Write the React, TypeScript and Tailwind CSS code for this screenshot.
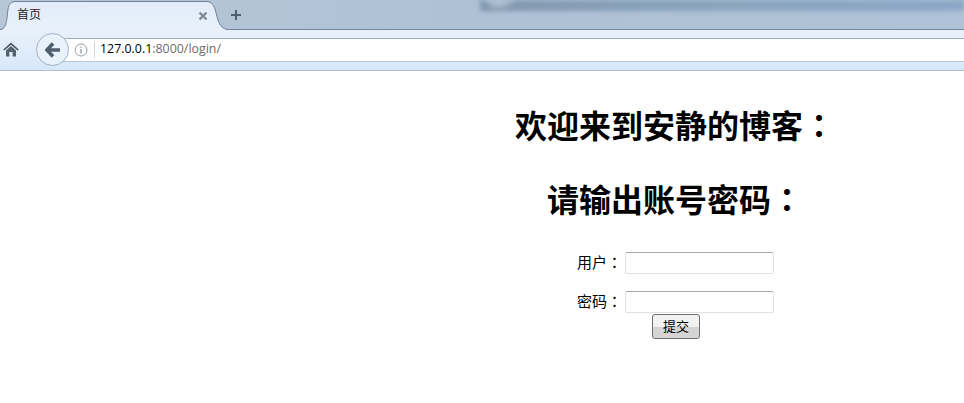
const CJK = "font-['Liberation_Sans','Noto_Sans_CJK_SC',sans-serif]";
// the reference's full-width colon sits centred in its cell, as in the TC font
const COLON = "font-['Noto_Sans_CJK_TC',sans-serif] leading-[0]";

function TabShape() {
  return (
    <svg className="absolute left-0 top-0" width="240" height="31" viewBox="0 0 240 31">
      <defs>
        <linearGradient id="tabFill" x1="0" y1="0" x2="0" y2="1">
          <stop offset="0" stopColor="#e2edf9" />
          <stop offset="1" stopColor="#e8f1fb" />
        </linearGradient>
      </defs>
      <path d="M0 30 C5 29 6 25 7 18 L8 9 C9 4 11 2 16 2 L206 2 C211 2 213 4 215 9 L218 20 C220 26 223 29 228 30 L240 30 L240 31 L0 31 Z" fill="url(#tabFill)" />
      <path d="M0 29.5 C5 29 6 25 7 18 L8 9 C9 4 11 1.5 16 1.5 L206 1.5 C211 1.5 213 4 215 9 L218 20 C220 26 223 29 228 29.5 L240 29.5" fill="none" stroke="#6f8297" strokeWidth="1" />
    </svg>
  );
}

function Toolbar() {
  return (
    <div className="relative h-[41px] bg-gradient-to-b from-[#e8f1fb] to-[#d8e8f9] border-b border-[#afc0d3]">
      <div className="flex h-full items-center">
        <svg className="ml-[3px] mb-[1px]" width="16" height="15" viewBox="0 0 16 15">
          <path d="M8 0.5 L15.7 7.6 L14.6 8.6 L8 2.8 L1.4 8.6 L0.3 7.6 Z" fill="#46535f" />
          <path d="M8 4 L13 8.4 L13 14.5 L9.6 14.5 L9.6 10 L6.4 10 L6.4 14.5 L3 14.5 L3 8.4 Z" fill="#55636f" />
        </svg>
        <div className="relative z-10 ml-[17px] mb-[1px] flex h-[33px] w-[33px] items-center justify-center rounded-full border border-[#9fb2c6] bg-[#e9f1fa]">
          <svg width="15" height="16" viewBox="0 0 15 16">
            <path d="M8 1.5 L2 8 L8 14.5 M3 8 L15 8" fill="none" stroke="#4f5f70" strokeWidth="3.6" />
          </svg>
        </div>
        <div className="-ml-[8px] mb-[1px] flex h-[24px] flex-1 items-center border-y border-t-[#a0adbd] border-b-[#b7c6d6] bg-white pl-[13px]">
          <svg width="14" height="14" viewBox="0 0 14 14">
            <circle cx="7" cy="7" r="6" fill="none" stroke="#9aa0a6" />
            <path d="M7 6 L7 10.5 M7 3.5 L7 4.8" stroke="#8a9096" strokeWidth="1.2" />
          </svg>
          <span className="ml-[6px] h-[16px] w-px bg-[#ccd3da]" />
          <span className="ml-[5px] font-['Open_Sans',sans-serif] text-[12.4px] text-[#6d6d6d]">
            <span className="text-black">127.0.0.1</span>:8000/login/
          </span>
        </div>
      </div>
    </div>
  );
}

function Field({ label }: { label: string }) {
  return (
    <div className="flex h-[22px] items-center justify-center">
      <span className="mb-[2px] text-[15px] leading-none text-black">
        {label}
        <span className={COLON}>：</span>
      </span>
      <input className="ml-[3px] h-[22px] w-[149px] rounded-[2px] border border-[#e0e0e6] border-t-[#a9a9a9] bg-white" type="text" />
    </div>
  );
}

export default function App() {
  return (
    <div className={`h-[403px] w-[964px] overflow-hidden bg-white ${CJK}`}>
      {/* window chrome */}
      <div className="relative h-[30px] overflow-hidden bg-gradient-to-r from-[#b8c7d8] via-[#aec1d5] to-[#afc2d7]">
        <div className="absolute left-[480px] right-0 top-0 h-[11px] bg-gradient-to-r from-[#8298ae] via-[#8ba5bf] to-[#8aa8c6] blur-[2px]" />
        <div className="absolute left-[484px] top-[-22px] h-[30px] w-[30px] rounded-full bg-[#aebfd1] blur-[3px]" />
        <div className="absolute bottom-0 left-0 right-0 h-px bg-[#74869a]" />
        <TabShape />
        <span className="absolute left-[17px] top-[8px] text-[12px] leading-[15px] text-[#222]">首页</span>
        <svg className="absolute left-[198px] top-[11px]" width="10" height="10" viewBox="0 0 10 10">
          <path d="M1.5 1.5 L8.5 8.5 M8.5 1.5 L1.5 8.5" stroke="#7d8a98" strokeWidth="2.4" />
        </svg>
        <svg className="absolute left-[230px] top-[9px]" width="12" height="12" viewBox="0 0 12 12">
          <path d="M6 1 L6 11 M1 6 L11 6" stroke="#4e5f70" strokeWidth="2" />
        </svg>
      </div>
      <Toolbar />
      {/* page */}
      <div className="ml-[482px] w-[386px] pt-[35px] text-center">
        <h1 className="text-[32px] font-bold leading-[42px] text-black">
          欢迎来到安静的博客<span className={COLON}>：</span>
        </h1>
        <h1 className="mt-[32px] text-[32px] font-bold leading-[42px] text-black">
          请输出账号密码<span className={COLON}>：</span>
        </h1>
        <div className="mt-[30px] flex flex-col gap-[17px] pl-[1px]">
          <Field label="用户" />
          <Field label="密码" />
        </div>
        <button className="ml-[2px] mt-[1px] h-[25px] w-[48px] rounded-[3px] border border-[#707070] bg-gradient-to-b from-[#f2f2f2] from-50% to-[#d4d4d4] to-50% text-[13px] leading-none text-black">
          提交
        </button>
      </div>
    </div>
  );
}
